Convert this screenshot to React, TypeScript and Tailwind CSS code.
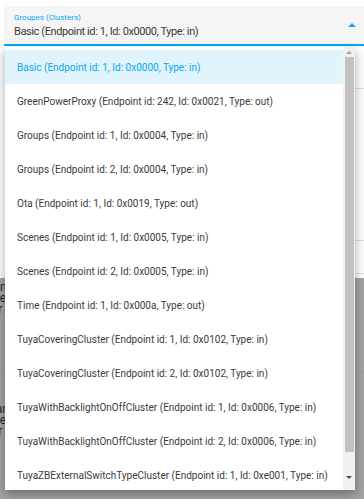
import React from 'react';

const options = [
    'Basic (Endpoint id: 1, Id: 0x0000, Type: in)',
    'GreenPowerProxy (Endpoint id: 242, Id: 0x0021, Type: out)',
    'Groups (Endpoint id: 1, Id: 0x0004, Type: in)',
    'Groups (Endpoint id: 2, Id: 0x0004, Type: in)',
    'Ota (Endpoint id: 1, Id: 0x0019, Type: out)',
    'Scenes (Endpoint id: 1, Id: 0x0005, Type: in)',
    'Scenes (Endpoint id: 2, Id: 0x0005, Type: in)',
    'Time (Endpoint id: 1, Id: 0x000a, Type: out)',
    'TuyaCoveringCluster (Endpoint id: 1, Id: 0x0102, Type: in)',
    'TuyaCoveringCluster (Endpoint id: 2, Id: 0x0102, Type: in)',
    'TuyaWithBacklightOnOffCluster (Endpoint id: 1, Id: 0x0006, Type: in)',
    'TuyaWithBacklightOnOffCluster (Endpoint id: 2, Id: 0x0006, Type: in)',
    'TuyaZBExternalSwitchTypeCluster (Endpoint id: 1, Id: 0xe001, Type: in)',
];

const ClusterSelect: React.FC = () => {
    const selected = 0;

    return (
        <div className="relative w-[364px] h-[499px] overflow-hidden bg-white font-['Roboto',sans-serif]">
            {/* dialog */}
            <div className="h-[278px] bg-white pt-[6px] pl-[4px]">
                <div className="relative h-[40px] bg-[#f5f5f5] rounded-t-[4px] border-b-2 border-[#03a9f4] pl-[10px] pt-[6px] -mr-[8px]">
                    <div className="text-[8px] leading-[12px] text-[#03a9f4]">Groupes (Clusters)</div>
                    <div className="text-[11px] leading-[16px] tracking-[-0.4px] text-[#3a3a3a]">{options[selected]}</div>
                    <span className="absolute right-[16px] top-[17px] w-0 h-0 border-l-[4px] border-r-[4px] border-b-[4px] border-l-transparent border-r-transparent border-b-[#03a9f4]"></span>
                </div>
                <div className="mt-[42px] ml-[200px] -mr-[6px] h-[186px] rounded-[6px] border border-[#e0e0e0] flex flex-col">
                    <div className="flex-1"></div>
                    <div className="h-[33px] border-t border-[#e0e0e0]"></div>
                </div>
            </div>

            {/* page behind the overlay */}
            <div className="h-[221px] bg-[#a4a4a4] text-[#2a2a2a] text-[12px] leading-[11px]">
                <div className="-ml-[40px] pt-[4px]">
                    <div>Fonction</div>
                    <div>Attribute</div>
                    <div className="pl-[6px]">cluster e</div>
                </div>
                <div className="mt-[56px] border-t border-[#9a9a9a]"></div>
                <div className="-ml-[40px] pt-[32px]">
                    <div>Commandn'</div>
                    <div>Attribute</div>
                    <div className="pl-[6px]">cluster e</div>
                </div>
            </div>

            {/* dropdown menu */}
            <div className="absolute left-[5px] top-[47px] w-[350px] h-[443px] bg-white shadow-[0_4px_10px_rgba(0,0,0,0.35)] flex">
                <div className="flex-1 pt-[3px] overflow-hidden">
                    {options.map((opt, i) => (
                        <div
                            key={opt}
                            className={
                                i === selected
                                    ? 'h-[34px] flex items-center pl-[12px] text-[10px] whitespace-nowrap bg-[#e1f4fd] text-[#03a9f4]'
                                    : 'h-[34px] flex items-center pl-[12px] text-[10px] whitespace-nowrap text-[#3a3a3a]'
                            }
                        >
                            {opt}
                        </div>
                    ))}
                </div>
                <div className="w-[12px] bg-[#f1f1f1] flex flex-col items-center">
                    <div className="h-[10px] flex items-center justify-center">
                        <span className="w-0 h-0 border-l-[3px] border-r-[3px] border-b-[3px] border-l-transparent border-r-transparent border-b-[#a3a3a3]"></span>
                    </div>
                    <div className="w-[9px] h-[395px] bg-[#c1c1c1]"></div>
                    <div className="flex-1"></div>
                    <div className="h-[14px] flex items-start justify-center">
                        <span className="w-0 h-0 border-l-[3px] border-r-[3px] border-t-[3px] border-l-transparent border-r-transparent border-t-[#505050]"></span>
                    </div>
                </div>
            </div>
        </div>
    );
};

export default ClusterSelect;
